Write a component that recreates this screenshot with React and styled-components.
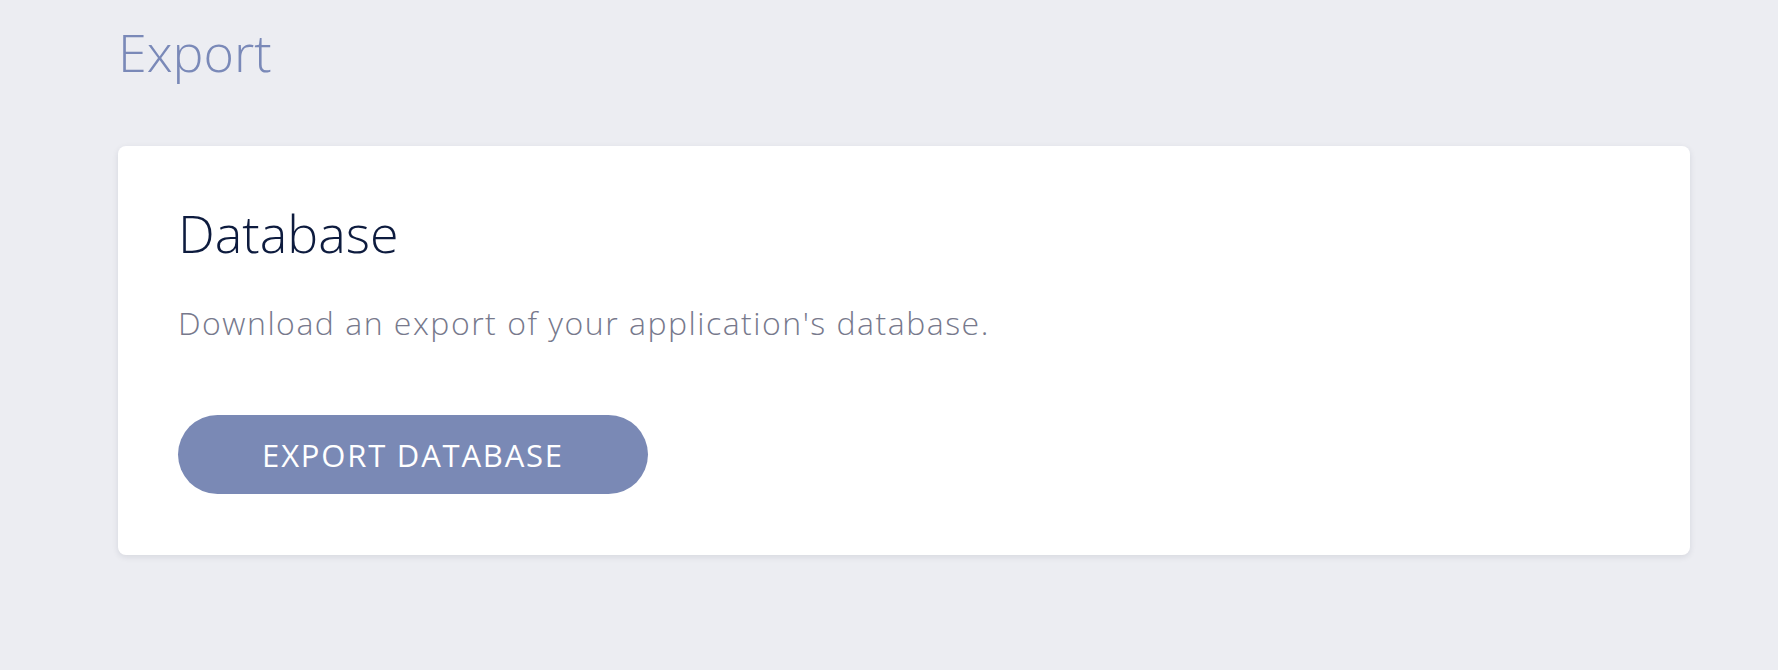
import React from "react";
import styled, { createGlobalStyle } from "styled-components";

const Global = createGlobalStyle`
  html, body { margin: 0; padding: 0; background: #ecedf2; }
  body { font-family: "Open Sans", "Lato", sans-serif; }
  * { box-sizing: border-box; }
`;

const Page = styled.main`
  min-height: 670px;
  padding: 21px 88px 40px 118px;
  display: flex;
  flex-direction: column;
  gap: 63px;
`;

const PageTitle = styled.h1`
  margin: 0;
  font-size: 52px;
  line-height: 62px;
  font-weight: 300;
  color: #7a89b8;
`;

const Card = styled.section`
  background: #ffffff;
  border-radius: 8px;
  box-shadow: 0 2px 6px rgba(20, 25, 60, 0.1);
  padding: 56px 60px 61px;
  display: flex;
  flex-direction: column;
  align-items: flex-start;
`;

const CardTitle = styled.h2`
  margin: 0;
  font-size: 52px;
  line-height: 62px;
  font-weight: 300;
  color: #0d1b3e;
`;

const CardText = styled.p`
  margin: 40px 0 0;
  font-size: 32px;
  line-height: 38px;
  font-weight: 300;
  letter-spacing: 1.5px;
  color: #77798c;
`;

const Button = styled.button`
  margin-top: 73px;
  width: 470px;
  height: 79px;
  border: none;
  border-radius: 40px;
  background: #7a89b5;
  color: #ffffff;
  font-family: inherit;
  font-size: 31px;
  font-weight: 500;
  letter-spacing: 1.8px;
  display: flex;
  align-items: center;
  justify-content: center;
  cursor: pointer;
`;

export default function App() {
  return (
    <>
      <Global />
      <Page>
        <PageTitle>Export</PageTitle>
        <Card>
          <CardTitle>Database</CardTitle>
          <CardText>Download an export of your application's database.</CardText>
          <Button>EXPORT DATABASE</Button>
        </Card>
      </Page>
    </>
  );
}
